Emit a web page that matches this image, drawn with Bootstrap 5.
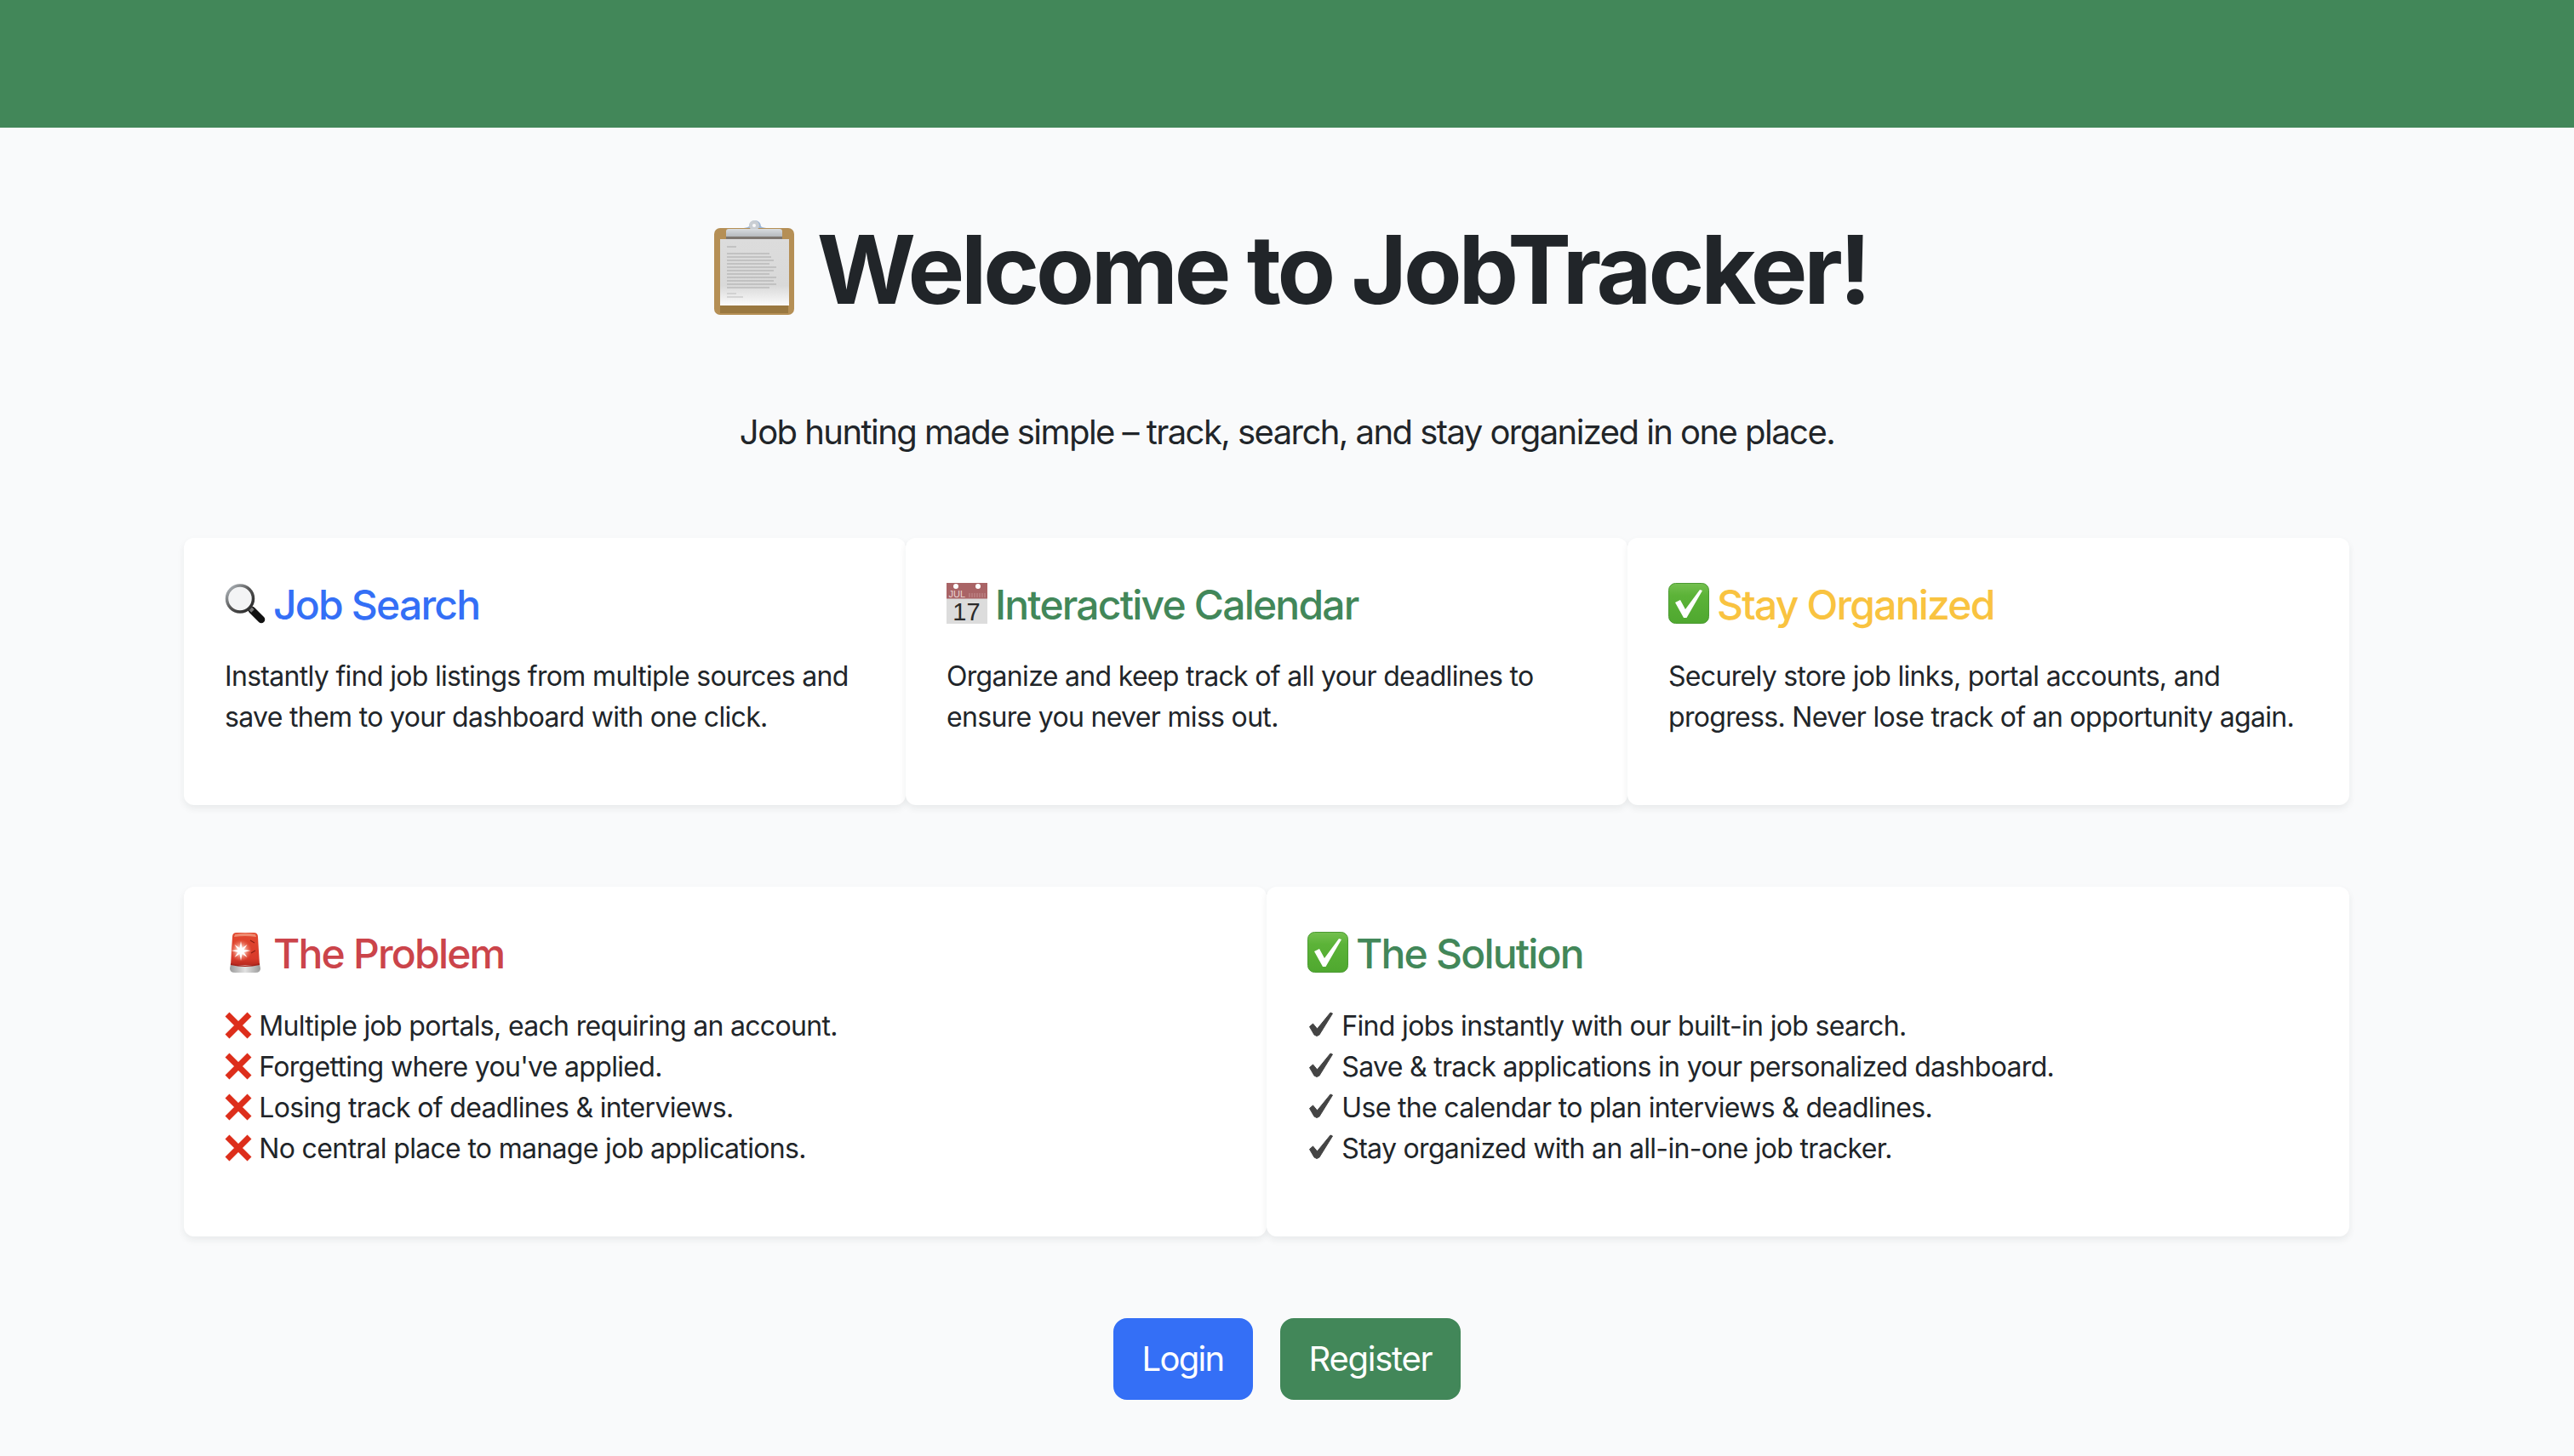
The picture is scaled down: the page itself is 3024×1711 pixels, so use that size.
<!DOCTYPE html>
<html lang="en">
<head>
<meta charset="utf-8">
<title>JobTracker</title>
<link href="https://cdn.jsdelivr.net/npm/bootstrap@5.3.0/dist/css/bootstrap.min.css" rel="stylesheet">
<style>
:root{--bs-border-width:2px;}
html{font-size:32px;}
body{font-family:"Inter","Liberation Sans",sans-serif;background:#f9fafb;color:#212529;letter-spacing:-.68px;-webkit-font-smoothing:antialiased;}
.container{max-width:2640px !important;}
.topbar{height:150px;background:#428759;}
.deck{max-width:2544px;}
.panel{border-radius:12px;padding:49.5px 48px 47px;}
.headline{letter-spacing:-4.100px;margin-top:99px;margin-bottom:95px;}
.strap{letter-spacing:-1.550px;margin-bottom:94px;}
h4{letter-spacing:-1.800px;}
.btn-lg{letter-spacing:-1.700px;}
.btn-leaf{letter-spacing:-1.250px;}
svg text{letter-spacing:0;}
.tone-blue{color:#346ff6;}
.tone-green{color:#428759;}
.tone-yellow{color:#f9c340;}
.tone-red{color:#cb444a;}
.btn-blue{--bs-btn-bg:#346ff6;--bs-btn-border-color:#346ff6;--bs-btn-color:#fff;--bs-btn-hover-bg:#2b60d8;--bs-btn-hover-color:#fff;}
.btn-leaf{--bs-btn-bg:#428759;--bs-btn-border-color:#428759;--bs-btn-color:#fff;--bs-btn-hover-bg:#37724b;--bs-btn-hover-color:#fff;}
.defs{display:block;width:0;height:0;overflow:hidden;}
.ico-lg{width:94px;height:111px;vertical-align:-13px;margin-left:10px;margin-right:4px;}
.ico-md{width:48px;height:48px;vertical-align:-5px;margin-right:-2px;}
.ico-sm{width:32px;height:32px;vertical-align:-4px;}
</style>
</head>
<body>
<svg class="defs" aria-hidden="true">
  <defs>
    <linearGradient id="paperG" x1="0" y1="0" x2="0" y2="1"><stop offset="0" stop-color="#dcdcdc"/><stop offset=".7" stop-color="#d9d9d9"/><stop offset="1" stop-color="#fbfbfb"/></linearGradient>
    <linearGradient id="clipG" x1="0" y1="0" x2="0" y2="1"><stop offset="0" stop-color="#d8dce0"/><stop offset="1" stop-color="#aeb2b6"/></linearGradient>
    <linearGradient id="boxG" x1="0" y1="0" x2="0" y2="1"><stop offset="0" stop-color="#74c04f"/><stop offset=".3" stop-color="#5cb338"/><stop offset="1" stop-color="#4fa82f"/></linearGradient>
    <linearGradient id="rimG" x1="0" y1="0" x2="1" y2="1"><stop offset="0" stop-color="#b9c0c6"/><stop offset=".5" stop-color="#555"/><stop offset="1" stop-color="#222"/></linearGradient>
    <linearGradient id="domeG" x1="0" y1="0" x2="0" y2="1"><stop offset="0" stop-color="#e2492f"/><stop offset=".8" stop-color="#d83a2a"/><stop offset="1" stop-color="#b82a20"/></linearGradient>
    <radialGradient id="glowG"><stop offset="0" stop-color="#fff"/><stop offset=".35" stop-color="#fbd5c8" stop-opacity=".9"/><stop offset="1" stop-color="#ee7458" stop-opacity="0"/></radialGradient>
    <linearGradient id="baseG" x1="0" y1="0" x2="1" y2="0"><stop offset="0" stop-color="#9a9a9a"/><stop offset=".5" stop-color="#e2e2e2"/><stop offset="1" stop-color="#9a9a9a"/></linearGradient>
    <symbol id="i-clip" viewBox="0 0 94 111">
      <rect x="0" y="9" width="94" height="102" rx="7" fill="#b58f55"/>
      <rect x="7" y="100" width="80" height="9" fill="#9a7840"/>
      <rect x="7" y="22" width="81" height="78" fill="url(#paperG)"/>
      <path d="M32 9q6 0 9-2a7 7 0 0 1 14 0q3 2 9 2z" fill="#9fb7d6"/>
      <circle cx="47" cy="6" r="6" fill="#c9ced3"/><circle cx="47" cy="6" r="2" fill="#f9fafb"/>
      <path d="M14 21v-8q0-3 3-3h60q3 0 3 3v8z" fill="url(#clipG)"/>
      <rect x="14" y="19" width="66" height="3" fill="#7d7670"/>
      <g stroke="#a9a9a9" stroke-width="1">
        <path d="M15 31h11M15 39h50M15 43h52M15 47h55M15 51h50M15 55h58M15 59h55M15 63h50M15 67h58M15 71h55M15 75h58M15 79h50"/>
      </g>
      <path d="M15 86h11M15 90h19" stroke="#bdbdbd" stroke-width="1"/>
    </symbol>
    <symbol id="i-lens" viewBox="0 0 48 48">
      <path d="M32 32l11 11" stroke="#111" stroke-width="8.5" stroke-linecap="round"/>
      <path d="M30 30l3 3" stroke="#777" stroke-width="5"/>
      <circle cx="18" cy="18.500" r="15.500" fill="#f3f4f5" stroke="url(#rimG)" stroke-width="3.500"/>
    </symbol>
    <symbol id="i-cal" viewBox="0 0 48 48">
      <rect width="48" height="48" fill="#dcdcdc"/>
      <rect width="48" height="18.500" fill="#a96466"/>
      <circle cx="11" cy="4" r="3" fill="#fff"/><circle cx="37" cy="4" r="3" fill="#fff"/>
      <text x="2.500" y="17" font-family="'Liberation Sans',sans-serif" font-size="11" fill="#e9d6d6">JUL</text>
      <path d="M27 17v-5M30 17v-5M33 17v-5M36 17v-5M39 17v-5M42 17v-5M45 17v-5" stroke="#c49091" stroke-width="1"/>
      <text x="23.500" y="43.500" text-anchor="middle" font-family="'Liberation Sans',sans-serif" font-size="29" fill="#2b2b2b">17</text>
    </symbol>
    <symbol id="i-ok" viewBox="0 0 48 48">
      <rect x=".5" y=".5" width="47" height="47" rx="8" fill="url(#boxG)" stroke="#4c9a33"/>
      <polygon points="8,23 14,20 20,31 37,8 40,9 21.500,41 18,41" fill="#fff"/>
    </symbol>
    <symbol id="i-siren" viewBox="0 0 48 48">
      <path d="M9 6q0-5 5-5h20q5 0 5 5l2 33H7z" fill="url(#domeG)"/>
      <path d="M12 3q12-3 24 0l1 3q-13-2-26 0z" fill="#ef8a6f"/>
      <circle cx="19" cy="22" r="13" fill="url(#glowG)"/>
      <path d="M19 11l1.500 8 6-4-4 6 8 1-8 2 4 6-6-4-1.500 8-1.500-8-6 4 4-6-8-2 8-1-4-6 6 4z" fill="#fff"/>
      <path d="M30 10l5 3M31 25l5-3" stroke="#8d1d14" stroke-width="1.200"/>
      <path d="M7 38q17 4 34 0l1 5q0 5-6 5H12q-6 0-6-5z" fill="url(#baseG)"/>
      <path d="M7 37q17 5 34 0l.1 2q-17 4-34.200 0z" fill="#a6231b"/>
    </symbol>
    <symbol id="i-x" viewBox="0 0 32 32">
      <path d="M3 3l26 26M29 3L3 29" stroke="#dd2e1b" stroke-width="7"/>
    </symbol>
    <symbol id="i-tick" viewBox="0 0 32 32">
      <polygon points="2.500,17.500 6.500,14 11.500,20 27,1 29.500,2 14,27 11,28.500 8,27" fill="#444" stroke="#444" stroke-width="1" stroke-linejoin="round"/>
    </symbol>
  </defs>
</svg>

<nav class="navbar topbar p-0"></nav>

<main class="container text-center">
  <h1 class="display-4 fw-bold headline"><svg class="ico-lg"><use href="#i-clip"/></svg> Welcome to JobTracker!</h1>
  <p class="lead fw-normal strap">Job hunting made simple – track, search, and stay organized in one place.</p>

  <div class="row g-0 deck text-start mb-5">
    <div class="col-4">
      <div class="card panel border-0 shadow-sm h-100">
        <h4 class="fw-medium tone-blue mb-3"><svg class="ico-md"><use href="#i-lens"/></svg> Job Search</h4>
        <p>Instantly find job listings from multiple sources and save them to your dashboard with one click.</p>
      </div>
    </div>
    <div class="col-4">
      <div class="card panel border-0 shadow-sm h-100">
        <h4 class="fw-medium tone-green mb-3"><svg class="ico-md"><use href="#i-cal"/></svg> Interactive Calendar</h4>
        <p>Organize and keep track of all your deadlines to ensure you never miss out.</p>
      </div>
    </div>
    <div class="col-4">
      <div class="card panel border-0 shadow-sm h-100">
        <h4 class="fw-medium tone-yellow mb-3"><svg class="ico-md"><use href="#i-ok"/></svg> Stay Organized</h4>
        <p>Securely store job links, portal accounts, and progress. Never lose track of an opportunity again.</p>
      </div>
    </div>
  </div>

  <div class="row g-0 deck text-start mb-5">
    <div class="col-6">
      <div class="card panel border-0 shadow-sm h-100">
        <h4 class="fw-medium tone-red mb-3"><svg class="ico-md"><use href="#i-siren"/></svg> The Problem</h4>
        <ul class="list-unstyled">
          <li><svg class="ico-sm"><use href="#i-x"/></svg> Multiple job portals, each requiring an account.</li>
          <li><svg class="ico-sm"><use href="#i-x"/></svg> Forgetting where you've applied.</li>
          <li><svg class="ico-sm"><use href="#i-x"/></svg> Losing track of deadlines &amp; interviews.</li>
          <li><svg class="ico-sm"><use href="#i-x"/></svg> No central place to manage job applications.</li>
        </ul>
      </div>
    </div>
    <div class="col-6">
      <div class="card panel border-0 shadow-sm h-100">
        <h4 class="fw-medium tone-green mb-3"><svg class="ico-md"><use href="#i-ok"/></svg> The Solution</h4>
        <ul class="list-unstyled">
          <li><svg class="ico-sm"><use href="#i-tick"/></svg> Find jobs instantly with our built-in job search.</li>
          <li><svg class="ico-sm"><use href="#i-tick"/></svg> Save &amp; track applications in your personalized dashboard.</li>
          <li><svg class="ico-sm"><use href="#i-tick"/></svg> Use the calendar to plan interviews &amp; deadlines.</li>
          <li><svg class="ico-sm"><use href="#i-tick"/></svg> Stay organized with an all-in-one job tracker.</li>
        </ul>
      </div>
    </div>
  </div>

  <div class="d-flex justify-content-center gap-3">
    <a href="#" class="btn btn-lg btn-blue">Login</a>
    <a href="#" class="btn btn-lg btn-leaf">Register</a>
  </div>
</main>
<script src="https://cdn.jsdelivr.net/npm/bootstrap@5.3.0/dist/js/bootstrap.bundle.min.js"></script>
</body>
</html>
